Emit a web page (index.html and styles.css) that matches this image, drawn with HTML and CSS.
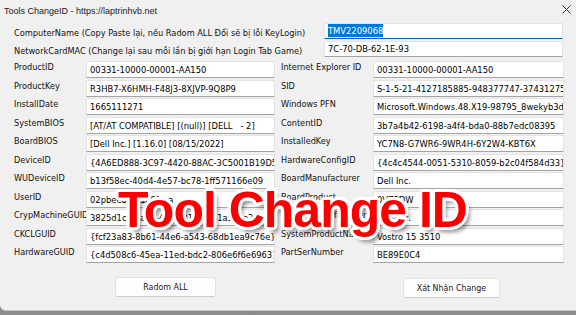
FILE: index.html
```html
<!DOCTYPE html>
<html lang="vi">
<head>
<meta charset="utf-8">
<title>Tools ChangeID</title>
<link rel="stylesheet" href="styles.css">
</head>
<body>
<div class="window">
  <div class="titlebar">
    <span class="title">Tools ChangeID - https://laptrinhvb.net</span>
    <svg class="close" width="9" height="9" viewBox="0 0 9 9"><path d="M0.5 0.5 L8.5 8.5 M8.5 0.5 L0.5 8.5" stroke="#333" stroke-width="1" fill="none"/></svg>
  </div>

  <div class="top">
    <div class="trow">
      <span class="tlabel">ComputerName (Copy Paste lại, nếu Radom ALL Đổi sẽ bị lỗi KeyLogin)</span>
      <div class="box focus"><span class="sel">TMV2209068</span></div>
    </div>
    <div class="trow">
      <span class="tlabel">NetworkCardMAC (Change lại sau mỗi lần bị giới hạn Login Tab Game)</span>
      <div class="box">7C-70-DB-62-1E-93</div>
    </div>
  </div>

  <div class="grid">
    <span class="lbl">ProductID</span><div class="box">00331-10000-00001-AA150</div>
    <span class="lbl r">Internet Explorer ID</span><div class="box">00331-10000-00001-AA150</div>

    <span class="lbl">ProductKey</span><div class="box">R3HB7-X6HMH-F48J3-8XJVP-9Q8P9</div>
    <span class="lbl r">SID</span><div class="box">S-1-5-21-4127185885-948377747-3743127591-1001</div>

    <span class="lbl">InstallDate</span><div class="box">1665111271</div>
    <span class="lbl r">Windows PFN</span><div class="box">Microsoft.Windows.48.X19-98795_8wekyb3d8bbwe</div>

    <span class="lbl">SystemBIOS</span><div class="box">[AT/AT COMPATIBLE] [(null)] [DELL   - 2]</div>
    <span class="lbl r">ContentID</span><div class="box">3b7a4b42-6198-a4f4-bda0-88b7edc08395</div>

    <span class="lbl">BoardBIOS</span><div class="box">[Dell Inc.] [1.16.0] [08/15/2022]</div>
    <span class="lbl r">InstalledKey</span><div class="box">YC7N8-G7WR6-9WR4H-6Y2W4-KBT6X</div>

    <span class="lbl">DeviceID</span><div class="box">{4A6ED888-3C97-4420-88AC-3C5001B19D5C}</div>
    <span class="lbl r">HardwareConfigID</span><div class="box">{4c4c4544-0051-5310-8059-b2c04f584d33}</div>

    <span class="lbl">WUDeviceID</span><div class="box">b13f58ec-40d4-4e57-bc78-1ff571166e09</div>
    <span class="lbl r">BoardManufacturer</span><div class="box">Dell Inc.</div>

    <span class="lbl">UserID</span><div class="box">02pbee8a4f1c6fcea</div>
    <span class="lbl r">BoardProduct</span><div class="box">0VZPDW</div>

    <span class="lbl">CrypMachineGUID</span><div class="box">3825d1c6-5a2e-4c61-9134-7b1a5c3e2d0f</div>
    <span class="lbl r">SystemManufacturer</span><div class="box">Dell Inc.</div>

    <span class="lbl">CKCLGUID</span><div class="box">{fcf23a83-8b61-44e6-a543-68db1ea9c76e}</div>
    <span class="lbl r">SystemProductName</span><div class="box">Vostro 15 3510</div>

    <span class="lbl">HardwareGUID</span><div class="box">{c4d508c6-45ea-11ed-bdc2-806e6f6e6963}</div>
    <span class="lbl r">PartSerNumber</span><div class="box">BE89E0C4</div>
  </div>

  <div class="buttons">
    <button class="btn btn-random">Radom ALL</button>
    <button class="btn btn-apply">Xát Nhận Change</button>
  </div>

  <div class="overlay">Tool Change ID</div>
</div>
</body>
</html>
```

FILE: styles.css
```css
html, body {
  margin: 0;
  padding: 0;
}
body {
  width: 576px;
  height: 315px;
  overflow: hidden;
  background: linear-gradient(#cfcfcf, #8c8c8c);
}
.window {
  position: relative;
  height: 311px;
  box-sizing: border-box;
  background: #f0f0f0;
  border-bottom: 1px solid #c4c4c4;
  border-bottom-left-radius: 6px;
  font-family: "DejaVu Sans Condensed", "DejaVu Sans", sans-serif;
  font-stretch: condensed;
  font-size: 9.3px;
  color: #111;
}
.titlebar {
  height: 20px;
  display: flex;
  align-items: center;
  justify-content: space-between;
  padding: 0 5px 0 4px;
  box-sizing: border-box;
}
.title {
  font-family: "Liberation Sans", Arial, sans-serif;
  font-stretch: normal;
  font-size: 9px;
  color: #1b1b1b;
  padding-top: 1px;
}
.close {
  display: block;
  margin-top: -2px;
}
.top {
  padding: 3px 0 0 14px;
  display: flex;
  flex-direction: column;
  gap: 2px;
}
.trow {
  display: grid;
  grid-template-columns: 310px 239px;
  height: 16px;
}
.tlabel {
  white-space: nowrap;
  overflow: hidden;
  line-height: 16px;
  padding-top: 2px;
  font-size: 9.15px;
}
.box {
  box-sizing: border-box;
  background: #fff;
  border: 1px solid #e4e4e4;
  border-bottom-color: #a3a3a3;
  padding: 0 3px;
  white-space: pre;
  overflow: hidden;
  line-height: 15px;
  color: #000;
}
.trow .box {
  line-height: 14px;
}
.box.focus {
  border-bottom: 1px solid #0063c5;
}
.sel {
  background: #0078d7;
  color: #fff;
  padding: 1px 0;
}
.grid {
  margin-top: 4px;
  padding-left: 14px;
  display: grid;
  grid-template-columns: 72px 189px 98px 191px;
  grid-auto-rows: 17px;
  row-gap: 1.5px;
}
.lbl {
  white-space: nowrap;
  overflow: hidden;
  line-height: 13px;
  font-size: 9.1px;
}
.lbl.r {
  padding-left: 6px;
}
.buttons {
  display: flex;
  padding: 14px 0 0 115px;
}
.btn {
  font-family: "DejaVu Sans Condensed", "DejaVu Sans", sans-serif;
  font-stretch: condensed;
  font-size: 8.8px;
  color: #1a1a1a;
  background: #fdfdfd;
  border: 1px solid #e2e2e2;
  border-bottom-color: #cdcdcd;
  border-radius: 3px;
  height: 20px;
  padding: 0;
}
.btn-random {
  width: 101px;
}
.btn-apply {
  width: 97px;
  margin-left: 187px;
  margin-top: 1px;
}
.overlay {
  position: absolute;
  left: 9px;
  right: 0;
  top: 185px;
  text-align: center;
  font-family: "Liberation Sans", Arial, sans-serif;
  font-stretch: normal;
  font-weight: bold;
  font-size: 50px;
  letter-spacing: -1px;
  line-height: 1;
  color: #fa0000;
  white-space: nowrap;
  text-shadow:
    3px 0 0 #fff, -3px 0 0 #fff, 0 3px 0 #fff, 0 -3px 0 #fff,
    2px 2px 0 #fff, -2px 2px 0 #fff, 2px -2px 0 #fff, -2px -2px 0 #fff,
    3px 1px 0 #fff, -3px 1px 0 #fff, 3px -1px 0 #fff, -3px -1px 0 #fff,
    1px 3px 0 #fff, -1px 3px 0 #fff, 1px -3px 0 #fff, -1px -3px 0 #fff,
    4px 5px 4px rgba(0, 0, 0, 0.45);
}
```
